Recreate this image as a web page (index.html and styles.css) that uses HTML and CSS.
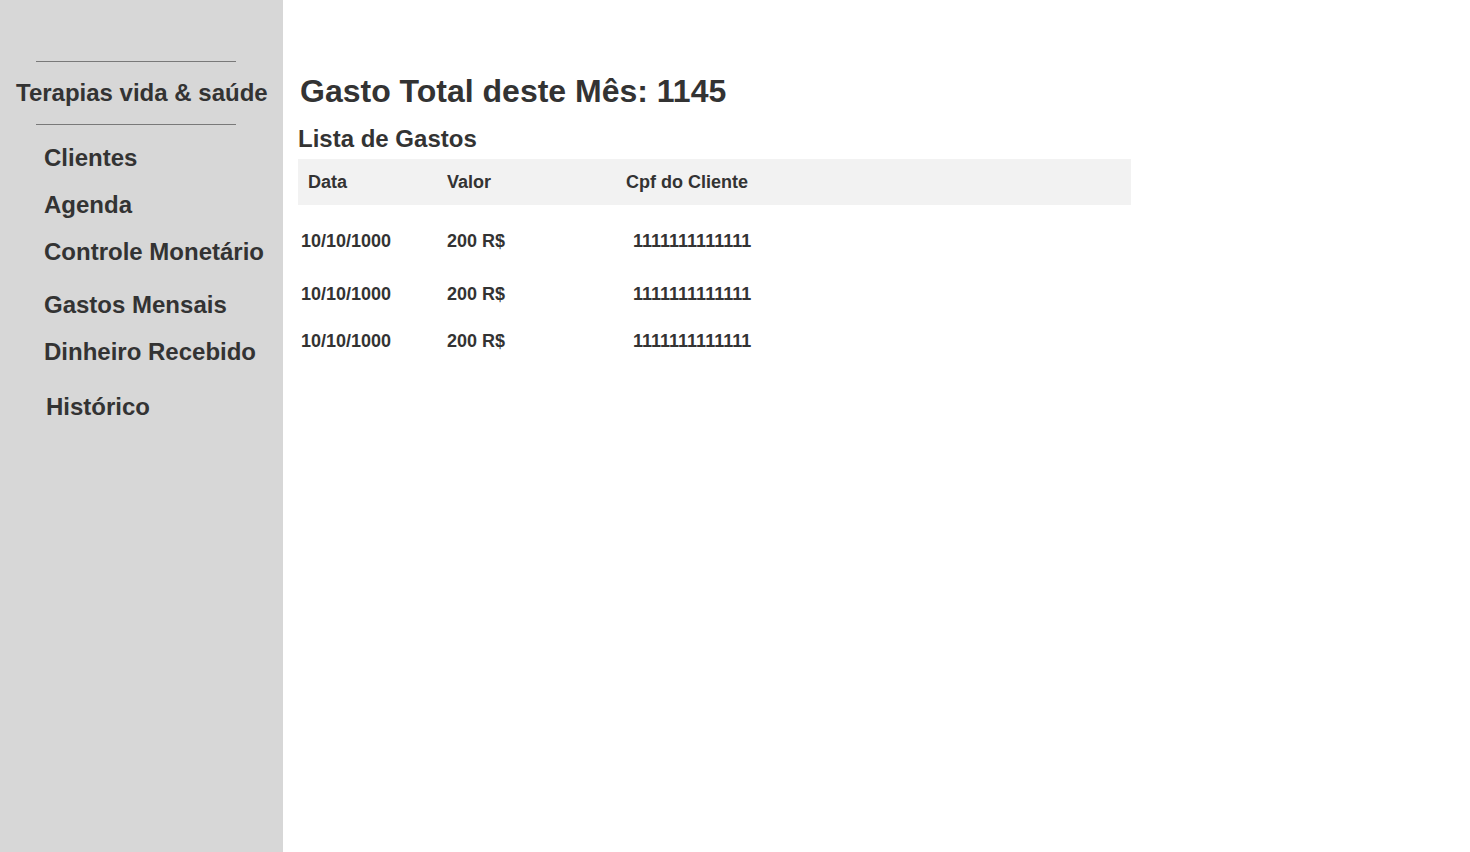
FILE: index.html
```html
<!DOCTYPE html>
<html lang="pt-BR">
<head>
<meta charset="utf-8">
<title>Terapias vida &amp; saúde</title>
<link rel="stylesheet" href="styles.css">
</head>
<body>
<div class="page">
  <aside class="sidebar">
    <div class="brand">Terapias vida &amp; saúde</div>
    <nav class="menu">
      <a href="#">Clientes</a>
      <a href="#">Agenda</a>
      <a href="#" class="group-end">Controle Monetário</a>
      <a href="#">Gastos Mensais</a>
      <a href="#" class="group-end">Dinheiro Recebido</a>
      <a href="#" class="history">Histórico</a>
    </nav>
  </aside>
  <main class="content">
    <h1>Gasto Total deste Mês: 1145</h1>
    <h2>Lista de Gastos</h2>
    <table class="expenses">
      <thead>
        <tr><th class="date">Data</th><th class="value">Valor</th><th>Cpf do Cliente</th></tr>
      </thead>
      <tbody>
        <tr class="first"><td>10/10/1000</td><td>200 R$</td><td>1111111111111</td></tr>
        <tr><td>10/10/1000</td><td>200 R$</td><td>1111111111111</td></tr>
        <tr class="last"><td>10/10/1000</td><td>200 R$</td><td>1111111111111</td></tr>
      </tbody>
    </table>
  </main>
</div>
</body>
</html>
```

FILE: styles.css
```css
* {
  box-sizing: border-box;
}

body {
  margin: 0;
  background: #ffffff;
  color: #333333;
  font-family: "Liberation Sans", Arial, sans-serif;
  font-weight: 700;
}

.page {
  display: flex;
  min-height: 100vh;
}

.sidebar {
  flex: 0 0 283px;
  padding-top: 61px;
  background: #d7d7d7;
  font-size: 24px;
  line-height: 28px;
  white-space: nowrap;
}

.brand {
  padding-left: 16px;
}

.brand::before,
.brand::after {
  content: "";
  display: block;
  width: 200px;
  height: 1px;
  margin-left: 20px;
  background: #797979;
}

.brand::before {
  margin-bottom: 17px;
}

.brand::after {
  margin-top: 17px;
}

.menu {
  display: flex;
  flex-direction: column;
  align-items: flex-start;
  padding: 19px 0 0 44px;
}

.menu a {
  margin-bottom: 19px;
  color: inherit;
  text-decoration: none;
}

.menu .group-end {
  margin-bottom: 25px;
}

.menu .history {
  padding: 2px 0 0 2px;
}

.content {
  flex: 1;
  min-width: 0;
  padding: 73px 16px 0 15px;
}

h1 {
  margin: 0;
  padding-left: 2px;
  font-size: 32px;
  line-height: 37px;
}

h2 {
  margin: 15px 0 6px;
  font-size: 24px;
  line-height: 28px;
}

.expenses {
  width: 100%;
  max-width: 833px;
  border-collapse: collapse;
  table-layout: fixed;
  font-size: 18px;
  line-height: 20px;
  text-align: left;
}

.expenses th {
  height: 46px;
  padding: 0;
  background: #f2f2f2;
}

.expenses .date {
  width: 149px;
  padding-left: 10px;
}

.expenses .value {
  width: 179px;
}

.expenses td {
  height: 34px;
  padding: 0;
}

.expenses td:first-child {
  padding-left: 3px;
}

.expenses td:last-child {
  padding-left: 7px;
}

.expenses .first td {
  height: 72px;
}

.expenses .last td {
  height: 60px;
}
```
